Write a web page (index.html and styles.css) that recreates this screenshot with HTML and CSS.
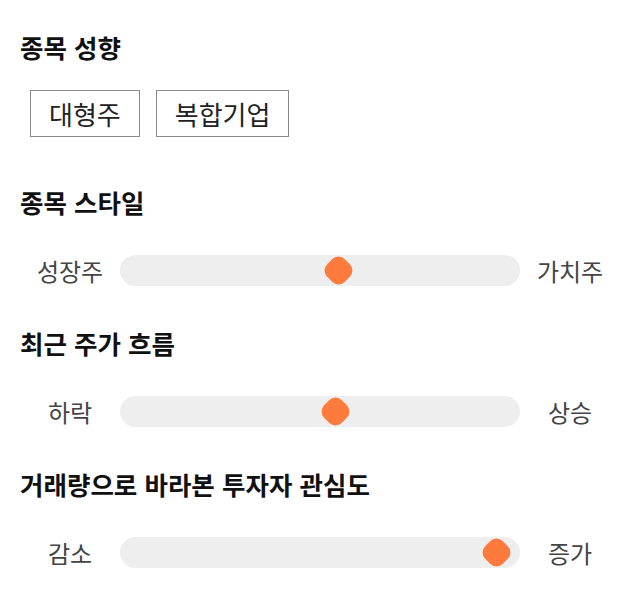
FILE: index.html
```html
<!DOCTYPE html>
<html lang="ko">
<head>
<meta charset="utf-8">
<link rel="stylesheet" href="styles.css">
</head>
<body>
<div class="page">
  <section class="group">
    <h2 class="title">종목 성향</h2>
    <div class="tags">
      <span class="tag">대형주</span>
      <span class="tag">복합기업</span>
    </div>
  </section>

  <section class="group slider-group">
    <h2 class="title">종목 스타일</h2>
    <div class="slider-row">
      <span class="label">성장주</span>
      <div class="track"><span class="thumb" style="left: 54.5%"></span></div>
      <span class="label">가치주</span>
    </div>
  </section>

  <section class="group slider-group">
    <h2 class="title">최근 주가 흐름</h2>
    <div class="slider-row">
      <span class="label">하락</span>
      <div class="track"><span class="thumb" style="left: 53.75%"></span></div>
      <span class="label">상승</span>
    </div>
  </section>

  <section class="group slider-group">
    <h2 class="title">거래량으로 바라본 투자자 관심도</h2>
    <div class="slider-row">
      <span class="label">감소</span>
      <div class="track"><span class="thumb" style="left: 94%"></span></div>
      <span class="label">증가</span>
    </div>
  </section>
</div>
</body>
</html>
```

FILE: styles.css
```css
* { box-sizing: border-box; }
html, body { margin: 0; padding: 0; background: #fff; }
body {
  font-family: "Noto Sans CJK KR", "Noto Sans", sans-serif;
  color: #111;
}
.page {
  width: 640px;
  padding: 32px 20px 0 20px;
}
.title {
  margin: 0;
  font-size: 25.5px;
  font-weight: 700;
  line-height: 30px;
  height: 30px;
  color: #111;
}
.tags {
  display: flex;
  gap: 16px;
  margin-top: 28px;
  padding-left: 10px;
}
.tag {
  display: flex;
  align-items: center;
  justify-content: center;
  height: 47px;
  padding: 0 18px;
  border: 1px solid #8a8a8a;
  font-size: 26px;
  font-weight: 400;
  color: #222;
}
.group + .group { margin-top: 50px; }
.slider-group + .slider-group { margin-top: 42px; }
.slider-row {
  display: flex;
  align-items: center;
  margin-top: 38px;
  height: 31px;
}
.label {
  width: 100px;
  text-align: center;
  font-size: 24px;
  color: #444;
  flex: none;
}
.track {
  position: relative;
  flex: 1;
  height: 31px;
  border-radius: 16px;
  background: #eeeeee;
}
.track .thumb {
  position: absolute;
  top: 50%;
  width: 25px;
  height: 25px;
  margin-left: -12.5px;
  margin-top: -12.5px;
  background: #ff7a3d;
  border-radius: 9px;
  transform: rotate(45deg);
}
```
